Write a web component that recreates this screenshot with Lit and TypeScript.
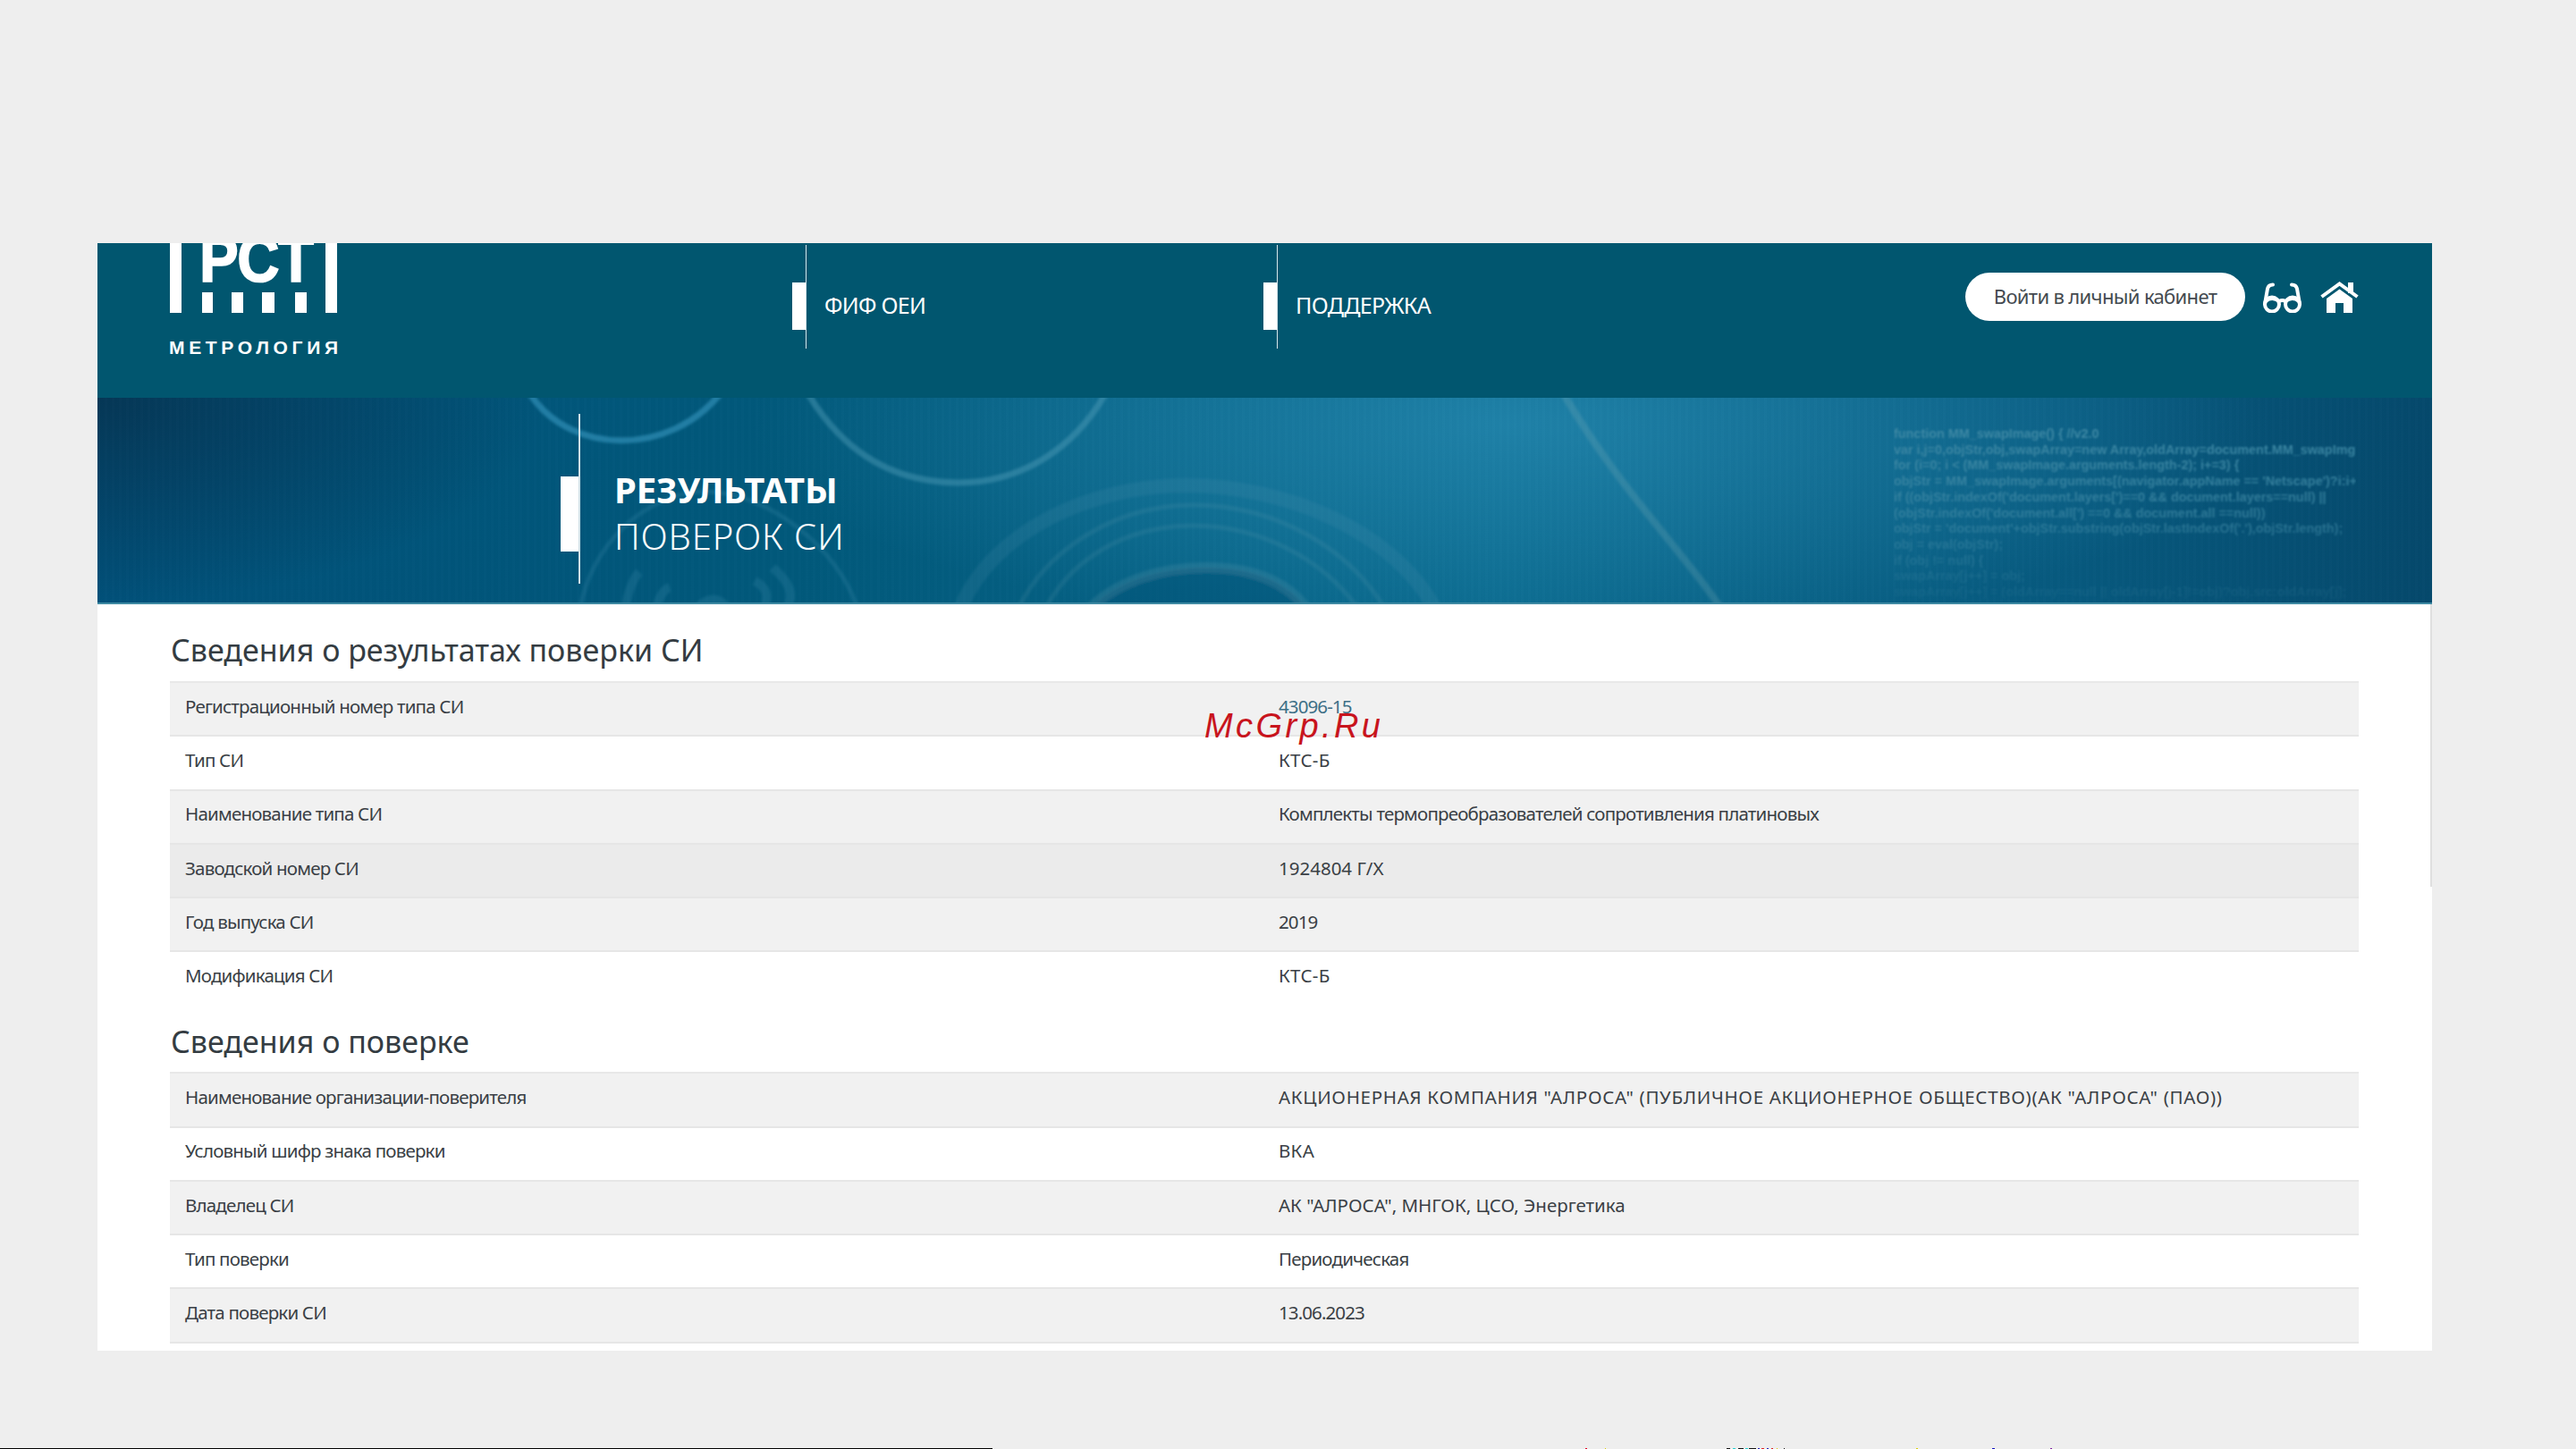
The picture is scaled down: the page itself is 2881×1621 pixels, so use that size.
import { LitElement, html, css, svg } from "lit";
import { customElement } from "lit/decorators.js";

type Fit = "caps" | "mixed" | "short" | "nums" | "";
type Row = { k: string; v: string; fit?: Fit; link?: boolean; hover?: boolean };

const TABLE_A: Row[] = [
  { k: "Регистрационный номер типа СИ", v: "43096-15", fit: "nums", link: true },
  { k: "Тип СИ", v: "КТС-Б", fit: "short" },
  { k: "Наименование типа СИ", v: "Комплекты термопреобразователей сопротивления платиновых" },
  { k: "Заводской номер СИ", v: "1924804 Г/Х", fit: "mixed", hover: true },
  { k: "Год выпуска СИ", v: "2019", fit: "nums" },
  { k: "Модификация СИ", v: "КТС-Б", fit: "short" },
];
const TABLE_B: Row[] = [
  { k: "Наименование организации-поверителя", v: 'АКЦИОНЕРНАЯ КОМПАНИЯ "АЛРОСА" (ПУБЛИЧНОЕ АКЦИОНЕРНОЕ ОБЩЕСТВО)(АК "АЛРОСА" (ПАО))', fit: "caps" },
  { k: "Условный шифр знака поверки", v: "ВКА", fit: "short" },
  { k: "Владелец СИ", v: 'АК "АЛРОСА", МНГОК, ЦСО, Энергетика', fit: "mixed" },
  { k: "Тип поверки", v: "Периодическая" },
  { k: "Дата поверки СИ", v: "13.06.2023", fit: "nums" },
];
const CODE = [
  "function MM_swapImage() { //v2.0",
  "var i,j=0,objStr,obj,swapArray=new Array,oldArray=document.MM_swapImgData;",
  "for (i=0; i < (MM_swapImage.arguments.length-2); i+=3) {",
  "objStr = MM_swapImage.arguments[(navigator.appName == 'Netscape')?i:i+1];",
  "if ((objStr.indexOf('document.layers[')==0 && document.layers==null) ||",
  "(objStr.indexOf('document.all[') ==0 && document.all ==null))",
  "objStr = 'document'+objStr.substring(objStr.lastIndexOf('.'),objStr.length);",
  "obj = eval(objStr);",
  "if (obj != null) {",
  "swapArray[j++] = obj;",
  "swapArray[j++] = (oldArray==null || oldArray[j-1]!=obj)?obj.src:oldArray[j];",
];
const TICKS: [number, number, string][] = [
  [1773, 2, "#e00020"], [1795, 1, "#d8d000"], [1931, 4, "#101010"], [1938, 3, "#20d0d0"], [1944, 6, "#101010"],
  [1952, 3, "#20d0d0"], [1956, 8, "#101010"], [1966, 2, "#2020c0"], [1970, 3, "#e02020"], [1976, 2, "#2020c0"],
  [1981, 2, "#e02020"], [1987, 1, "#d8d000"], [1995, 1, "#101010"], [2143, 2, "#d8d000"], [2228, 3, "#1010c0"], [2293, 2, "#8020a0"],
];

const bannerArt = svg`
  <svg class="art" viewBox="0 0 2611 231" width="2611" height="231" fill="none" aria-hidden="true">
    <defs><filter id="soft"><feGaussianBlur stdDeviation="1.8"/></filter></defs>
    <g filter="url(#soft)">
      <path d="M484 -4 C530 65 640 65 696 -4" stroke="#2f8db5" stroke-opacity=".7" stroke-width="7"/>
      <path d="M795 -4 C840 70 900 95 963 95 C1030 95 1090 60 1127 -4" stroke="#5ba6bd" stroke-opacity=".4" stroke-width="7"/>
      <path d="M1640 -4 C1700 100 1780 180 1816 236" stroke="#8fb7c0" stroke-opacity=".2" stroke-width="8"/>
      <path d="M965 236 C1000 150 1110 98 1218 98 C1330 98 1450 150 1496 236" stroke="#5c9fb5" stroke-opacity=".14" stroke-width="16"/>
      <path d="M1030 236 C1060 170 1140 120 1225 120 C1320 120 1400 170 1440 236" stroke="#6fa8b8" stroke-opacity=".14" stroke-width="5"/>
      <path d="M1060 236 C1090 180 1150 143 1225 143 C1300 143 1370 180 1410 236" stroke="#6fa8b8" stroke-opacity=".14" stroke-width="5"/>
      <path d="M1110 236 C1140 205 1190 190 1240 190 C1290 190 1330 205 1352 236 Z" fill="#0a5478" fill-opacity=".55"/>
      <path d="M1110 236 C1140 205 1190 190 1240 190 C1290 190 1330 205 1352 236" stroke="#7fb0b8" stroke-opacity=".16" stroke-width="12"/>
      <path d="M540 236 C550 170 610 105 680 105 C750 105 830 170 850 236" stroke="#3f93b3" stroke-opacity=".22" stroke-width="5"/>
      <path d="M590 236 Q596 205 606 195 M625 236 Q630 215 640 212 M670 236 Q690 215 705 236 M745 236 Q755 215 735 205 M770 236 Q785 215 755 190" stroke="#3f93b3" stroke-opacity=".22" stroke-width="10"/>
    </g>
  </svg>`;

@customElement("app-root")
export class AppRoot extends LitElement {
  static styles = css`
    :host { display: flex; flex-direction: column; position: relative; width: 2881px; height: 1621px; background: #eeeeee; overflow: hidden; font-family: "Noto Sans", "Open Sans", sans-serif; color: #3a3f45; }
    .card { width: 2611px; height: 1239px; margin: 272px 0 0 109px; background: #fff; overflow: hidden; position: relative; flex: none; }
    .edge { position: absolute; right: 0; top: 404px; width: 2px; height: 316px; background: #dfdfdf; }
    .header { display: flex; align-items: flex-start; height: 173px; background: #01566f; padding: 0 82px 0 80px; }
    .logo { width: 190px; height: 128px; flex: none; display: block; }
    .logo text { fill: #fff; font-family: "Liberation Sans", sans-serif; font-weight: 700; }
    .logo .mono { stroke: #fff; stroke-width: 1.6px; }
    .nav { display: flex; margin: 2px 0 0 507px; }
    .nav-item { display: flex; align-items: center; width: 527px; height: 116px; box-sizing: border-box; padding-top: 20px; gap: 20px; color: #fff; font-size: 25px; letter-spacing: -0.7px; }
    .nav-label { margin-bottom: 3px; }
    .mark { position: relative; width: 16px; height: 53px; background: #fff; flex: none; }
    .mark::after { content: ""; position: absolute; right: 0; top: -42px; width: 1px; height: 116px; background: #d8e6ea; }
    .actions { display: flex; align-items: flex-start; margin-left: auto; padding-top: 33px; }
    .login { width: 313px; height: 54px; border-radius: 27px; background: #fff; color: #444a50; display: flex; align-items: center; justify-content: center; font-size: 22px; letter-spacing: -0.65px; padding-bottom: 2px; box-sizing: border-box; }
    .glasses { display: block; margin: 11px 0 0 19px; }
    .house { display: block; margin: 10px 0 0 20px; }
    .banner { position: relative; height: 231px; overflow: hidden; border-bottom: 2px solid #3f8aa3; box-sizing: border-box;
      background:
        repeating-linear-gradient(90deg, rgba(255,255,255,.008) 0 3px, rgba(0,0,0,.008) 3px 8px),
        radial-gradient(ellipse 850px 240px at 1580px 30px, rgba(45,145,185,.6), rgba(45,145,185,0) 100%),
        radial-gradient(ellipse 500px 230px at 0 0, rgba(6,50,80,.85), rgba(6,50,80,0) 100%),
        linear-gradient(90deg, #01517a 0, #01597b 30%, #0a6a8e 60%, #07597e 85%, #05496c 100%);
    }
    .art { position: absolute; left: 0; top: 0; }
    .code { position: absolute; left: 2009px; top: 32px; width: 517px; overflow: hidden; font: 700 14.4px/17.7px "Liberation Sans", sans-serif; color: #3f89a5; white-space: nowrap; filter: blur(.8px);
      -webkit-mask-image: linear-gradient(180deg, rgba(0,0,0,1) 0, rgba(0,0,0,.75) 45%, rgba(0,0,0,.12) 100%); mask-image: linear-gradient(180deg, rgba(0,0,0,1) 0, rgba(0,0,0,.75) 45%, rgba(0,0,0,.12) 100%); }
    .title { position: relative; display: flex; align-items: center; gap: 38px; height: 229px; margin-left: 518px; }
    .title-mark { position: relative; width: 22px; height: 84px; background: #fff; flex: none; margin-top: 30px; }
    .title-mark::after { content: ""; position: absolute; right: 0; top: -70px; width: 2px; height: 190px; background: #cfe0e6; }
    .title-text { color: #fff; font-size: 40px; line-height: 52px; margin-top: 29px; }
    .title-text b { display: block; font-weight: 700; letter-spacing: -0.2px; }
    .title-text span { display: block; font-weight: 300; letter-spacing: 0.9px; }
    .content { padding: 0 82px 0 81px; }
    h2 { margin: 0 0 14px 1px; font-size: 34px; line-height: 42px; font-weight: 400; color: #343c42; }
    h2.first { padding-top: 30px; }
    h2.next { padding-top: 18.5px; margin-bottom: 13px; }
    .row { display: grid; grid-template-columns: 1223px 1fr; align-items: center; height: 60.3px; box-sizing: border-box; padding: 0 17px 7px; border-bottom: 2px solid #e6e6e6; font-size: 20.5px; letter-spacing: -0.8px; background: #fff; }
    .table { border-top: 2px solid #e8e8e8; }
    .row:nth-child(odd) { background: #f1f1f1; }
    .row:nth-child(even):last-child { border-bottom-color: transparent; }
    .row.hover { background: #ebebeb; }
    .row .link { color: #3d6f86; }
    .caps { letter-spacing: 0.7px; }
    .mixed { letter-spacing: 0; }
    .short { letter-spacing: 0.3px; }
    .nums { letter-spacing: -0.9px; }
    .watermark { position: absolute; left: 1347px; top: 789px; font: italic 400 38px/46px "Liberation Sans", sans-serif; letter-spacing: 3.4px; color: #c8141d; white-space: nowrap; }
    .strip { position: absolute; left: 0; bottom: 0; width: 100%; height: 1px; background: #eeeeee; display: flex; }
    .black { width: 1110px; height: 1px; background: #000; flex: none; }
    .tick { position: absolute; top: 0; height: 1px; }
  `;

  private table(rows: Row[]) {
    return html`<div class="table">
      ${rows.map(
        (r) => html`<div class="row ${r.hover ? "hover" : ""}">
          <div>${r.k}</div>
          <div class="${r.fit ?? ""} ${r.link ? "link" : ""}">${r.v}</div>
        </div>`
      )}
    </div>`;
  }

  render() {
    return html`
      <div class="card">
        <div class="header">
          <svg class="logo" viewBox="0 0 190 128" aria-label="РСТ Метрология">
            <g fill="#fff">
              <rect x="1" y="0" width="13" height="78"/>
              <rect x="175" y="0" width="13" height="78"/>
              <rect x="37" y="55" width="12" height="23"/>
              <rect x="70" y="55" width="13" height="23"/>
              <rect x="104" y="55" width="14" height="23"/>
              <rect x="141" y="55" width="13" height="23"/>
            </g>
            <text class="mono" x="34" y="43" font-size="72" textLength="128" lengthAdjust="spacingAndGlyphs">РСТ</text>
            <text x="0" y="124" font-size="21" textLength="189" lengthAdjust="spacing">МЕТРОЛОГИЯ</text>
          </svg>
          <div class="nav">
            <div class="nav-item"><span class="mark"></span><span class="nav-label">ФИФ ОЕИ</span></div>
            <div class="nav-item"><span class="mark"></span><span class="nav-label">ПОДДЕРЖКА</span></div>
          </div>
          <div class="actions">
            <div class="login">Войти в личный кабинет</div>
            <svg class="glasses" width="45" height="34" viewBox="0 0 45 34" fill="none" stroke="#fff" stroke-width="4" stroke-linecap="round" stroke-linejoin="round">
              <circle cx="11" cy="24.5" r="8"/>
              <circle cx="34" cy="24.5" r="8"/>
              <path d="M3 24 L6 7 Q7 2.5 12 2.5"/>
              <path d="M42 24 L39 7 Q38 2.5 33 2.5"/>
              <path d="M4 21 Q11 15 19 21 Q22.500 19 26 21 Q34 15 41 21"/>
            </svg>
            <svg class="house" width="43" height="35" viewBox="0 0 43 35" fill="#fff">
              <rect x="31" y="1" width="6" height="12"/>
              <path d="M1.500 17 L21.500 2.500 L41.500 17" fill="none" stroke="#fff" stroke-width="4" stroke-linejoin="miter"/>
              <path d="M7 19 L21.500 8.500 L36 19 V35 H26 V24 H17 V35 H7 Z"/>
            </svg>
          </div>
        </div>
        <div class="banner">
          ${bannerArt}
          <div class="code">${CODE.map((l) => html`<div>${l}</div>`)}</div>
          <div class="title">
            <span class="title-mark"></span>
            <div class="title-text"><b>РЕЗУЛЬТАТЫ</b><span>ПОВЕРОК СИ</span></div>
          </div>
        </div>
        <div class="content">
          <h2 class="first">Сведения о результатах поверки СИ</h2>
          ${this.table(TABLE_A)}
          <h2 class="next">Сведения о поверке</h2>
          ${this.table(TABLE_B)}
        </div>
        <div class="edge"></div>
      </div>
      <div class="watermark">McGrp.Ru</div>
      <div class="strip">
        <div class="black"></div>
        ${TICKS.map(([x, w, c]) => html`<span class="tick" style="left:${x}px;width:${w}px;background:${c}"></span>`)}
      </div>
    `;
  }
}
